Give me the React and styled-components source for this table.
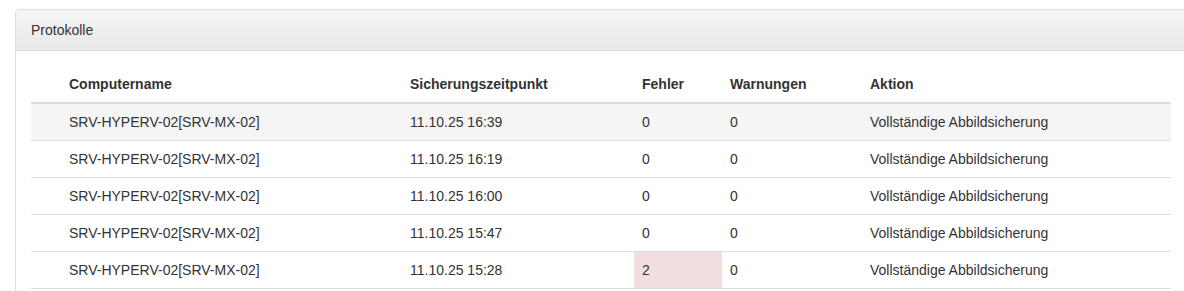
import React from "react";
import styled, { createGlobalStyle } from "styled-components";

const GlobalStyle = createGlobalStyle`
    body {
        margin: 0;
        background: #fff;
        font-family: "Liberation Sans", Arial, sans-serif;
        font-size: 14px;
        color: #333;
        overflow: hidden;
    }
`
const Pagina = styled.div`
    padding: 9px 0 0 15px;
`
const Painel = styled.div`
    width: 1170px;
    border: 1px solid #ddd;
    border-radius: 4px 4px 0 0;
    background: #fff;
    box-shadow: 0 1px 1px rgba(0, 0, 0, 0.05);
`
const CabecalhoPainel = styled.div`
    padding: 10px 15px;
    line-height: 20px;
    color: #333;
    background-image: linear-gradient(to bottom, #f5f5f5 0%, #e8e8e8 100%);
    border-bottom: 1px solid #ddd;
    border-radius: 3px 3px 0 0;
`
const CorpoPainel = styled.div`
    padding: 15px;
`
const Tabela = styled.table`
    width: 100%;
    table-layout: fixed;
    border-collapse: collapse;
    border-spacing: 0;
`
const Titulo = styled.th`
    text-align: left;
    font-weight: bold;
    padding: 8px;
    line-height: 20px;
    border-bottom: 2px solid #ddd;
`
const Linha = styled.tr`
    background: ${props => props.destacada ? "#f5f5f5" : "transparent"};
`
const Celula = styled.td`
    padding: 8px;
    line-height: 20px;
    border-bottom: 1px solid #ddd;
    white-space: nowrap;
    background: ${props => props.erro ? "#f2dede" : "transparent"};
`

const protocolos = [
    { nome: "SRV-HYPERV-02[SRV-MX-02]", hora: "11.10.25 16:39", fehler: 0, warnungen: 0 },
    { nome: "SRV-HYPERV-02[SRV-MX-02]", hora: "11.10.25 16:19", fehler: 0, warnungen: 0 },
    { nome: "SRV-HYPERV-02[SRV-MX-02]", hora: "11.10.25 16:00", fehler: 0, warnungen: 0 },
    { nome: "SRV-HYPERV-02[SRV-MX-02]", hora: "11.10.25 15:47", fehler: 0, warnungen: 0 },
    { nome: "SRV-HYPERV-02[SRV-MX-02]", hora: "11.10.25 15:28", fehler: 2, warnungen: 0 },
]

export default function App() {
    return (
        <>
            <GlobalStyle />
            <Pagina>
                <Painel>
                    <CabecalhoPainel>Protokolle</CabecalhoPainel>
                    <CorpoPainel>
                        <Tabela>
                            <colgroup>
                                <col style={{ width: 30 }} />
                                <col style={{ width: 341 }} />
                                <col style={{ width: 232 }} />
                                <col style={{ width: 88 }} />
                                <col style={{ width: 140 }} />
                                <col />
                            </colgroup>
                            <thead>
                                <tr>
                                    <Titulo></Titulo>
                                    <Titulo>Computername</Titulo>
                                    <Titulo>Sicherungszeitpunkt</Titulo>
                                    <Titulo>Fehler</Titulo>
                                    <Titulo>Warnungen</Titulo>
                                    <Titulo>Aktion</Titulo>
                                </tr>
                            </thead>
                            <tbody>
                                {protocolos.map((p, i) => (
                                    <Linha key={i} destacada={i === 0}>
                                        <Celula></Celula>
                                        <Celula>{p.nome}</Celula>
                                        <Celula>{p.hora}</Celula>
                                        <Celula erro={p.fehler > 0}>{p.fehler}</Celula>
                                        <Celula>{p.warnungen}</Celula>
                                        <Celula>Vollständige Abbildsicherung</Celula>
                                    </Linha>
                                ))}
                            </tbody>
                        </Tabela>
                    </CorpoPainel>
                </Painel>
            </Pagina>
        </>
    )
}
